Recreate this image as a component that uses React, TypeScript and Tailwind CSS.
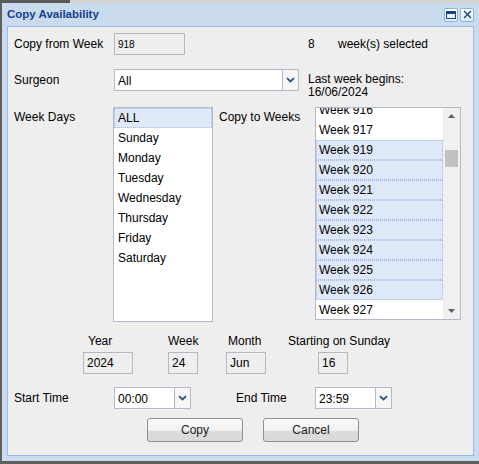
import React from "react";

const weekDays = ["ALL", "Sunday", "Monday", "Tuesday", "Wednesday", "Thursday", "Friday", "Saturday"];

const weeks = [
  { n: 916, sel: false },
  { n: 917, sel: false },
  { n: 919, sel: true },
  { n: 920, sel: true },
  { n: 921, sel: true },
  { n: 922, sel: true },
  { n: 923, sel: true },
  { n: 924, sel: true },
  { n: 925, sel: true },
  { n: 926, sel: true },
  { n: 927, sel: false },
];

function ComboBox({ value, className }: { value: string; className: string }) {
  return (
    <div className={`flex h-[22px] border border-[#b5b8c8] bg-white ${className}`}>
      <div className="flex flex-1 items-center pl-[3px] pt-[2px]">{value}</div>
      <div className="flex w-[16px] items-center justify-center border-l border-[#b5b8c8] bg-[#f6f6f6]">
        <svg width="9" height="6" viewBox="0 0 9 6">
          <path d="M1 1.2l3.5 3.3L8 1.2" stroke="#2e4f85" strokeWidth="1.8" fill="none" />
        </svg>
      </div>
    </div>
  );
}

function ReadBox({ value, className }: { value: string; className: string }) {
  return (
    <div className={`flex h-[22px] items-center border border-[#b4b7c4] bg-[#eeeeee] pl-[3px] ${className}`}>
      {value}
    </div>
  );
}

function Button({ label, className }: { label: string; className: string }) {
  return (
    <div
      className={`flex h-[24px] w-[96px] items-center justify-center rounded-[3px] border border-[#8e8e8e] bg-[linear-gradient(to_bottom,#fbfbfb_0%,#efefef_55%,#dcdcdc_56%,#d9d9d9_100%)] text-[#222] ${className}`}
    >
      {label}
    </div>
  );
}

function TitleButton({ children }: { children: React.ReactNode }) {
  return (
    <div className="flex h-[14px] w-[14px] items-center justify-center rounded-[2px] border border-[#8fb1e0] bg-[linear-gradient(to_bottom,#ffffff,#e3ecf8)]">
      {children}
    </div>
  );
}

export default function App() {
  return (
    <div
      className="relative h-[464px] w-[479px] overflow-hidden bg-[#5f5f5f] text-[12px] text-black"
      style={{ fontFamily: '"Liberation Sans", Arial, sans-serif' }}
    >
      <div className="flex h-[3px]">
        <div className="w-[70px] bg-[#5a5a5a]" />
        <div className="flex-1 bg-[#d2d2d2]" />
      </div>
      <div className="ml-[2px] flex h-[458px] w-[477px] flex-col bg-[#cbdbef] px-[5px]">
        {/* title bar */}
        <div className="flex h-[23px] items-center justify-between">
          <span className="text-[11.5px] font-bold text-[#15428b]">Copy Availability</span>
          <div className="flex gap-[2px]">
            <TitleButton>
              <svg width="10" height="8" viewBox="0 0 10 8">
                <rect x="0.5" y="0.5" width="9" height="7" fill="none" stroke="#15428b" />
                <rect x="0.5" y="0.5" width="9" height="2.5" fill="#15428b" />
              </svg>
            </TitleButton>
            <TitleButton>
              <svg width="9" height="9" viewBox="0 0 9 9">
                <path d="M1 1l7 7M8 1l-7 7" stroke="#15428b" strokeWidth="1.4" />
              </svg>
            </TitleButton>
          </div>
        </div>

        {/* body */}
        <div className="flex h-[430px] flex-col border border-[#99bbe8] bg-[#eeeeee] pl-[6px] pt-[6px]">
          <div className="flex h-[22px] items-center">
            <span className="w-[100px]">Copy from Week</span>
            <ReadBox value="918" className="w-[71px] text-[10px]" />
            <span className="ml-[123px] w-[30px]">8</span>
            <span>week(s) selected</span>
          </div>

          <div className="mt-[14px] flex items-start">
            <span className="w-[100px] leading-[22px]">Surgeon</span>
            <ComboBox value="All" className="w-[185px]" />
            <div className="ml-[9px] mt-[4px] leading-[13px]">
              <div>Last week begins:</div>
              <div>16/06/2024</div>
            </div>
          </div>

          <div className="mt-[8px] flex items-start">
            <span className="w-[99px] leading-[20px]">Week Days</span>
            <div className="h-[215px] w-[100px] overflow-hidden border border-[#b5b8c8] bg-white">
              {weekDays.map((d, i) => (
                <div
                  key={d}
                  className={
                    i === 0
                      ? "h-[20px] border border-dotted border-[#a3bae9] bg-[#dfe8f6] pl-[3px] leading-[19px]"
                      : "h-[20px] pl-[4px] leading-[21px]"
                  }
                >
                  {d}
                </div>
              ))}
            </div>
            <span className="ml-[6px] w-[96px] leading-[20px]">Copy to Weeks</span>
            <div className="flex h-[213px] w-[146px] overflow-hidden border border-[#b5b8c8] bg-white">
              <div className="flex-1 overflow-hidden">
                <div className="mt-[-8px]">
                  {weeks.map((w) => (
                    <div
                      key={w.n}
                      className={
                        w.sel
                          ? "h-[20px] border border-dotted border-[#a3bae9] bg-[#dfe8f6] pl-[2px] leading-[19px]"
                          : "h-[20px] pl-[3px] leading-[21px]"
                      }
                    >
                      Week {w.n}
                    </div>
                  ))}
                </div>
              </div>
              <div className="flex w-[17px] flex-col items-center bg-[#f0f0f0]">
                <svg className="mt-[6px]" width="7" height="4" viewBox="0 0 7 4">
                  <path d="M0 4L3.5 0L7 4z" fill="#606060" />
                </svg>
                <div className="mt-[32px] h-[17px] w-[13px] bg-[#c1c1c1]" />
                <div className="flex-1" />
                <svg className="mb-[6px]" width="7" height="4" viewBox="0 0 7 4">
                  <path d="M0 0L3.5 4L7 0z" fill="#606060" />
                </svg>
              </div>
            </div>
          </div>

          <div className="mt-[12px] flex leading-[14px]">
            <span className="ml-[74px] w-[80px]">Year</span>
            <span className="w-[60px]">Week</span>
            <span className="w-[60px]">Month</span>
            <span>Starting on Sunday</span>
          </div>

          <div className="mt-[4px] flex">
            <ReadBox value="2024" className="ml-[69px] w-[50px]" />
            <ReadBox value="24" className="ml-[35px] w-[30px]" />
            <ReadBox value="Jun" className="ml-[28px] w-[40px]" />
            <ReadBox value="16" className="ml-[52px] w-[30px]" />
          </div>

          <div className="mt-[13px] flex items-center">
            <span className="w-[100px]">Start Time</span>
            <ComboBox value="00:00" className="w-[77px]" />
            <span className="ml-[45px] w-[79px]">End Time</span>
            <ComboBox value="23:59" className="w-[77px]" />
          </div>

          <div className="mt-[9px] flex">
            <Button label="Copy" className="ml-[133px]" />
            <Button label="Cancel" className="ml-[20px]" />
          </div>
        </div>
      </div>
    </div>
  );
}
